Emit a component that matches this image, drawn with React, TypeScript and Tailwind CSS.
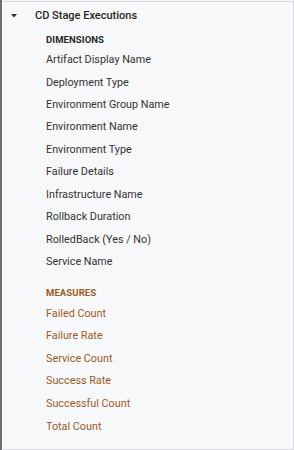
const DIMENSIONS = [
  'Artifact Display Name',
  'Deployment Type',
  'Environment Group Name',
  'Environment Name',
  'Environment Type',
  'Failure Details',
  'Infrastructure Name',
  'Rollback Duration',
  'RolledBack (Yes / No)',
  'Service Name',
];

const MEASURES = ['Failed Count', 'Failure Rate', 'Service Count', 'Success Rate', 'Successful Count', 'Total Count'];

export default function App() {
  return (
    <div
      className="w-[294px] h-[450px] bg-[#f7f8fa] border-l-2 border-[#6e6e6e] flex flex-col"
      style={{ fontFamily: 'Roboto, "Liberation Sans", sans-serif' }}
    >
      <div className="mt-[1px] ml-[1px] flex-1 flex flex-col border-t border-b border-r border-[#d9dae0]">
        {/* Explore header */}
        <div className="h-[28px] flex items-center pl-[8px]">
          <svg width="6" height="4" viewBox="0 0 6 4" className="mr-[18px]">
            <path d="M0 0 L6 0 L3 3.5 Z" fill="#333" />
          </svg>
          <span className="text-[11px] font-medium text-[#262626]">CD Stage Executions</span>
        </div>

        <div className="pl-[43px] pt-[2px] flex flex-col">
          <div className="h-[16px] flex items-center text-[9.5px] font-bold text-[#262626] tracking-[0.1px]">DIMENSIONS</div>
          <div className="mt-[1px] flex flex-col">
            {DIMENSIONS.map((d) => (
              <div key={d} className="h-[22.45px] flex items-center text-[10.8px] text-[#333]">
                {d}
              </div>
            ))}
          </div>

          <div className="mt-[12px] h-[16px] flex items-center text-[9.5px] font-bold text-[#9e5a25] tracking-[0.1px]">MEASURES</div>
          <div className="mt-[1px] flex flex-col">
            {MEASURES.map((m) => (
              <div key={m} className="h-[22.6px] flex items-center text-[10.8px] text-[#9e5a25]">
                {m}
              </div>
            ))}
          </div>
        </div>
      </div>
    </div>
  );
}
